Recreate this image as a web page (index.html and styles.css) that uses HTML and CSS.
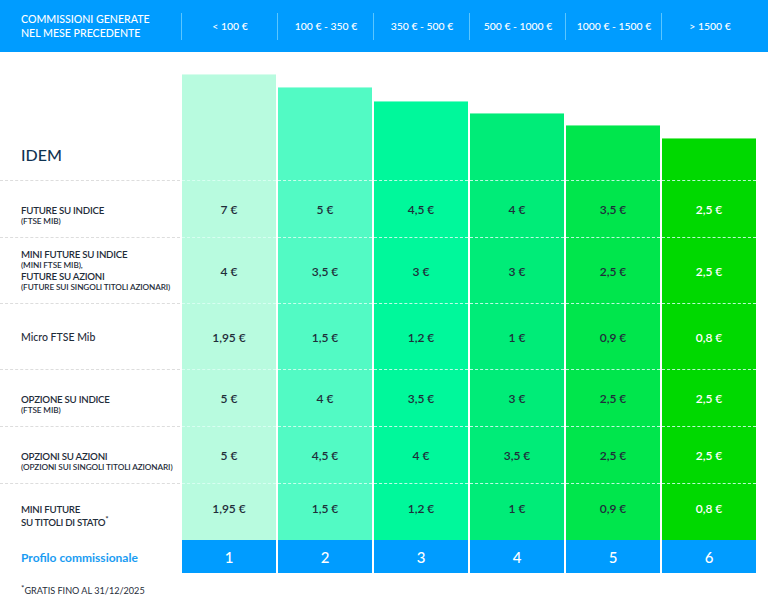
FILE: index.html
```html
<!DOCTYPE html>
<html lang="it">
<head>
<meta charset="utf-8">
<title>Commissioni IDEM</title>
<link rel="stylesheet" href="styles.css">
</head>
<body>
<header class="head">
  <div class="head-title">COMMISSIONI GENERATE<br>NEL MESE PRECEDENTE</div>
  <div class="head-range">&lt; 100 €</div>
  <div class="head-range">100 € - 350 €</div>
  <div class="head-range">350 € - 500 €</div>
  <div class="head-range">500 € - 1000 €</div>
  <div class="head-range">1000 € - 1500 €</div>
  <div class="head-range">&gt; 1500 €</div>
</header>

<main class="table">
  <div class="lbl idem">IDEM</div>
  <div class="bar c1 b1"></div>
  <div class="bar c2 b2"></div>
  <div class="bar c3 b3"></div>
  <div class="bar c4 b4"></div>
  <div class="bar c5 b5"></div>
  <div class="bar c6 b6"></div>

  <div class="lbl row sub"><span class="main">FUTURE SU INDICE</span><span class="small">(FTSE MIB)</span></div>
  <div class="val row c1">7 €</div>
  <div class="val row c2">5 €</div>
  <div class="val row c3">4,5 €</div>
  <div class="val row c4">4 €</div>
  <div class="val row c5">3,5 €</div>
  <div class="val row c6">2,5 €</div>

  <div class="lbl row multi"><span class="main">MINI FUTURE SU INDICE</span><span class="small">(MINI FTSE MIB),</span><span class="main">FUTURE SU AZIONI</span><span class="small">(FUTURE SUI SINGOLI TITOLI AZIONARI)</span></div>
  <div class="val row c1">4 €</div>
  <div class="val row c2">3,5 €</div>
  <div class="val row c3">3 €</div>
  <div class="val row c4">3 €</div>
  <div class="val row c5">2,5 €</div>
  <div class="val row c6">2,5 €</div>

  <div class="lbl row"><span class="plain">Micro FTSE Mib</span></div>
  <div class="val row c1">1,95 €</div>
  <div class="val row c2">1,5 €</div>
  <div class="val row c3">1,2 €</div>
  <div class="val row c4">1 €</div>
  <div class="val row c5">0,9 €</div>
  <div class="val row c6">0,8 €</div>

  <div class="lbl row sub"><span class="main">OPZIONE SU INDICE</span><span class="small">(FTSE MIB)</span></div>
  <div class="val row c1">5 €</div>
  <div class="val row c2">4 €</div>
  <div class="val row c3">3,5 €</div>
  <div class="val row c4">3 €</div>
  <div class="val row c5">2,5 €</div>
  <div class="val row c6">2,5 €</div>

  <div class="lbl row sub"><span class="main">OPZIONI SU AZIONI</span><span class="small">(OPZIONI SUI SINGOLI TITOLI AZIONARI)</span></div>
  <div class="val row c1">5 €</div>
  <div class="val row c2">4,5 €</div>
  <div class="val row c3">4 €</div>
  <div class="val row c4">3,5 €</div>
  <div class="val row c5">2,5 €</div>
  <div class="val row c6">2,5 €</div>

  <div class="lbl row last"><span class="main two">MINI FUTURE</span><span class="main two">SU TITOLI DI STATO<sup>*</sup></span></div>
  <div class="val row lastv c1">1,95 €</div>
  <div class="val row lastv c2">1,5 €</div>
  <div class="val row lastv c3">1,2 €</div>
  <div class="val row lastv c4">1 €</div>
  <div class="val row lastv c5">0,9 €</div>
  <div class="val row lastv c6">0,8 €</div>

  <div class="lbl profile">Profilo commissionale</div>
  <div class="num">1</div>
  <div class="num">2</div>
  <div class="num">3</div>
  <div class="num">4</div>
  <div class="num">5</div>
  <div class="num">6</div>
</main>

<p class="note"><sup>*</sup>GRATIS FINO AL 31/12/2025</p>
</body>
</html>
```

FILE: styles.css
```css
* { box-sizing: border-box; }

body {
  margin: 0;
  background: #ffffff;
  font-family: Lato, "Open Sans", "Liberation Sans", sans-serif;
  color: #1f2d3a;
}

.head {
  height: 52px;
  background: #009cff;
  display: grid;
  grid-template-columns: 181px repeat(6, 96px);
  align-items: center;
  color: #ffffff;
}

.head-title {
  padding-left: 21px;
  font-size: 10.6px;
  font-weight: 500;
  line-height: 13.5px;
  padding-top: 1px;
}

.head-range {
  height: 27px;
  border-left: 1px solid #5ac6ff;
  display: flex;
  align-items: center;
  justify-content: center;
  font-size: 10.4px;
  font-weight: 500;
  padding-left: 1px;
}

.table {
  display: grid;
  grid-template-columns: 180px repeat(6, 94px);
  grid-template-rows: 128px 57px 66px 66px 57px 57px 57px 33px;
  column-gap: 2px;
}

.c1 { background: #b8fbdf; }
.c2 { background: #52fac4; }
.c3 { background: #00f89b; }
.c4 { background: #00ec78; }
.c5 { background: #00e64c; }
.c6 { background: #00d900; color: #ffffff; }

.bar {
  align-self: end;
  border-top: 1px solid rgba(255, 255, 255, 0.45);
}
.b1 { height: 106px; }
.b2 { height: 93px; }
.b3 { height: 79px; }
.b4 { height: 67px; }
.b5 { height: 55px; }
.b6 { height: 42px; }

.lbl {
  padding-left: 21px;
}

.idem {
  align-self: end;
  padding-bottom: 16px;
  font-size: 16px;
  font-weight: 500;
  color: #0f3352;
  line-height: 19px;
}

.row {
  border-top: 1px dashed rgba(220, 255, 245, 0.85);
}

.lbl.row {
  border-top-color: #dddddd;
  display: flex;
  flex-direction: column;
  justify-content: center;
}

.lbl.sub { padding-top: 12px; }
.lbl.last { padding-top: 7px; }

.main {
  font-size: 9.7px;
  font-weight: 600;
  line-height: 12px;
  letter-spacing: -0.25px;
  color: #1f2d3a;
}

.main.two { line-height: 13px; }

.small {
  font-size: 8.2px;
  font-weight: 600;
  line-height: 11px;
  letter-spacing: -0.1px;
  color: #1f2d3a;
}

.multi .main { line-height: 11px; }
.multi .small { line-height: 10.5px; }

.plain {
  font-size: 10.5px;
  font-weight: 500;
  color: #1f2d3a;
}

.main sup {
  font-size: 8px;
  line-height: 0;
  vertical-align: 4px;
}

.val {
  display: flex;
  align-items: center;
  justify-content: center;
  font-size: 12px;
  font-weight: 600;
  padding-top: 1px;
}

.val.lastv { padding-top: 0; padding-bottom: 7px; }

.profile {
  display: flex;
  align-items: center;
  font-size: 12px;
  font-weight: 700;
  color: #1a9cf2;
  padding-top: 1px;
}

.num {
  background: #009cff;
  color: #ffffff;
  display: flex;
  align-items: center;
  justify-content: center;
  font-size: 15px;
  font-weight: 500;
}

.note {
  margin: 12px 0 0;
  padding-left: 21px;
  font-size: 9.1px;
  line-height: 12px;
  color: #1f2d3a;
}

.note sup {
  font-size: 8px;
  line-height: 0;
  vertical-align: 3px;
}
```
